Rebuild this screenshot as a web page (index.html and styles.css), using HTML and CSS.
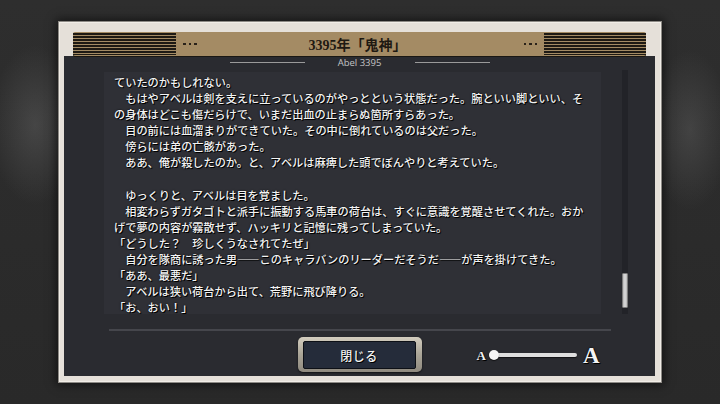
FILE: index.html
```html
<!DOCTYPE html>
<html lang="ja">
<head>
<meta charset="utf-8">
<link rel="stylesheet" href="styles.css">
</head>
<body>
<div class="window">
  <div class="band">
    <div class="stripes"></div>
    <div class="dots"><i></i><i></i><i></i></div>
    <div class="title">3395年「鬼神」</div>
    <div class="dots"><i></i><i></i><i></i></div>
    <div class="stripes stripes-r"></div>
  </div>
  <div class="panel">
    <div class="label"><span class="rule"></span><span class="label-text">Abel 3395</span><span class="rule"></span></div>
    <div class="body">
      <div class="text">
        <div class="ln">ていたのかもしれない。</div>
        <div class="ln">　もはやアベルは剣を支えに立っているのがやっとという状態だった。腕といい脚といい、そ</div>
        <div class="ln">の身体はどこも傷だらけで、いまだ出血の止まらぬ箇所すらあった。</div>
        <div class="ln">　目の前には血溜まりができていた。その中に倒れているのは父だった。</div>
        <div class="ln">　傍らには弟の亡骸があった。</div>
        <div class="ln">　ああ、俺が殺したのか。と、アベルは麻痺した頭でぼんやりと考えていた。</div>
        <div class="ln blank"></div>
        <div class="ln">　ゆっくりと、アベルは目を覚ました。</div>
        <div class="ln">　相変わらずガタゴトと派手に振動する馬車の荷台は、すぐに意識を覚醒させてくれた。おか</div>
        <div class="ln">げで夢の内容が霧散せず、ハッキリと記憶に残ってしまっていた。</div>
        <div class="ln">「どうした？　珍しくうなされてたぜ」</div>
        <div class="ln">　自分を隊商に誘った男――このキャラバンのリーダーだそうだ――が声を掛けてきた。</div>
        <div class="ln">「ああ、最悪だ」</div>
        <div class="ln">　アベルは狭い荷台から出て、荒野に飛び降りる。</div>
        <div class="ln">「お、おい！」</div>
      </div>
      <div class="scroll"><div class="thumb"></div></div>
    </div>
    <div class="sep"></div>
    <div class="footer">
      <div class="spacer"></div>
      <div class="close"><div class="close-inner">閉じる</div></div>
      <div class="size">
        <span class="a-small">A</span>
        <span class="track"><span class="knob"></span></span>
        <span class="a-big">A</span>
      </div>
    </div>
  </div>
</div>
</body>
</html>
```
FILE: styles.css
```css
html, body {
  margin: 0;
  padding: 0;
}
body {
  width: 720px;
  height: 404px;
  overflow: hidden;
  display: flex;
  align-items: center;
  justify-content: center;
  background:
    radial-gradient(ellipse 45px 80px at 35px 125px, rgba(100,100,100,0.45), rgba(100,100,100,0) 100%),
    radial-gradient(ellipse 40px 80px at 690px 130px, rgba(100,100,100,0.4), rgba(100,100,100,0) 100%),
    linear-gradient(#2e2e2e, #292929);
  font-family: "Noto Sans CJK JP", sans-serif;
}
.window {
  width: 602px;
  height: 360px;
  box-sizing: border-box;
  padding: 10px 5px 5px 4px;
  background: #e5e0d9;
  border: 1px solid #f1ede7;
  box-shadow: 0 0 0 1px #8d8a85, 0 0 9px 3px rgba(0,0,0,0.55);
  display: flex;
  flex-direction: column;
}
.band {
  height: 24px;
  margin: -1px 9px 0;
  background: #a48b64;
  border-radius: 2px;
  box-shadow: 0 1px 0 #1a1814;
  display: flex;
  align-items: center;
  position: relative;
  z-index: 1;
}
.stripes {
  width: 103px;
  height: 22px;
  background: repeating-linear-gradient(to bottom, #1e1a14 0, #1e1a14 1.6px, #a48b64 1.6px, #a48b64 3px);
}
.stripes-r { width: 102px; }
.dots {
  display: flex;
  gap: 3px;
  margin: 0 7px;
}
.dots i {
  width: 2.5px;
  height: 2.5px;
  background: #2a2219;
  display: block;
}
.title {
  flex: 1;
  text-align: center;
  font-family: "Liberation Serif", "Noto Sans CJK JP", serif;
  font-weight: bold;
  font-size: 14px;
  color: #1e1912;
  padding-right: 5px;
}
.panel {
  flex: 1;
  background: #2a2b30;
  display: flex;
  flex-direction: column;
}
.label {
  height: 13px;
  display: flex;
  align-items: center;
  justify-content: center;
  gap: 33px;
}
.rule {
  width: 75px;
  height: 1px;
  background: #9a9a9a;
}
.label-text {
  width: 44px;
  text-align: center;
  font-family: "Open Sans", sans-serif;
  font-size: 9.5px;
  line-height: 13px;
  color: #c4c4c4;
  white-space: nowrap;
}
.body {
  margin-top: 3px;
  height: 242px;
  display: flex;
  padding-left: 40px;
  gap: 21px;
}
.text {
  width: 497px;
  box-sizing: border-box;
  padding: 2px 0 0 10px;
  background: #2f3036;
  color: #f3f3f3;
  font-size: 11.2px;
  line-height: 16.1px;
  font-weight: 500;
  text-shadow: 1px 1px 0 #000, 0 0 2px rgba(0,0,0,0.9);
}
.ln {
  white-space: nowrap;
}
.blank { height: 16.1px; }
.scroll {
  width: 6px;
  margin-top: -2px;
  background: #222328;
  display: flex;
  flex-direction: column;
  padding-bottom: 6px;
}
.thumb {
  margin-top: auto;
  height: 35px;
  background: linear-gradient(to right, #b8b8b8, #dcdcdc 50%, #b8b8b8);
  border: 1px solid #7c7c7c;
  box-sizing: border-box;
  border-radius: 1px;
}
.sep {
  margin: 15px auto 0;
  width: 502px;
  height: 2px;
  background: #45464c;
}
.footer {
  margin-top: 6px;
  display: grid;
  grid-template-columns: 1fr 124px 1fr;
  align-items: center;
}
.close {
  height: 35px;
  box-sizing: border-box;
  padding: 4px 6px 3px 5px;
  border-radius: 5px;
  background: linear-gradient(#d3cdbf, #aaa597 50%, #8f8a7f);
  box-shadow: 0 1px 2px rgba(0,0,0,0.6);
  display: flex;
}
.close-inner {
  flex: 1;
  background: #252c3a;
  border: 1px solid #0d1016;
  border-radius: 2px;
  display: flex;
  align-items: center;
  justify-content: center;
  color: #f4f4f4;
  font-size: 12px;
  font-weight: 500;
  letter-spacing: 0.5px;
  text-shadow: 1px 1px 0 #000;
}
.size {
  padding-left: 55px;
  display: flex;
  align-items: center;
  font-family: "Liberation Serif", serif;
  font-weight: bold;
  color: #f4f4f4;
  text-shadow: 1px 1px 0 #000, 0 0 2px #000;
}
.a-small {
  font-size: 13px;
  line-height: 13px;
  margin-top: 2px;
}
.track {
  position: relative;
  width: 88px;
  height: 4px;
  margin-left: 3px;
  background: #dedede;
  border-radius: 2px;
  box-shadow: 0 1px 1px rgba(0,0,0,0.6);
}
.knob {
  position: absolute;
  left: 0;
  top: -3px;
  width: 10px;
  height: 10px;
  border-radius: 50%;
  background: #f5f5f5;
  box-shadow: 0 1px 1px rgba(0,0,0,0.6);
}
.a-big {
  font-size: 23px;
  line-height: 23px;
  margin-left: 6px;
  margin-top: 1px;
}
```
